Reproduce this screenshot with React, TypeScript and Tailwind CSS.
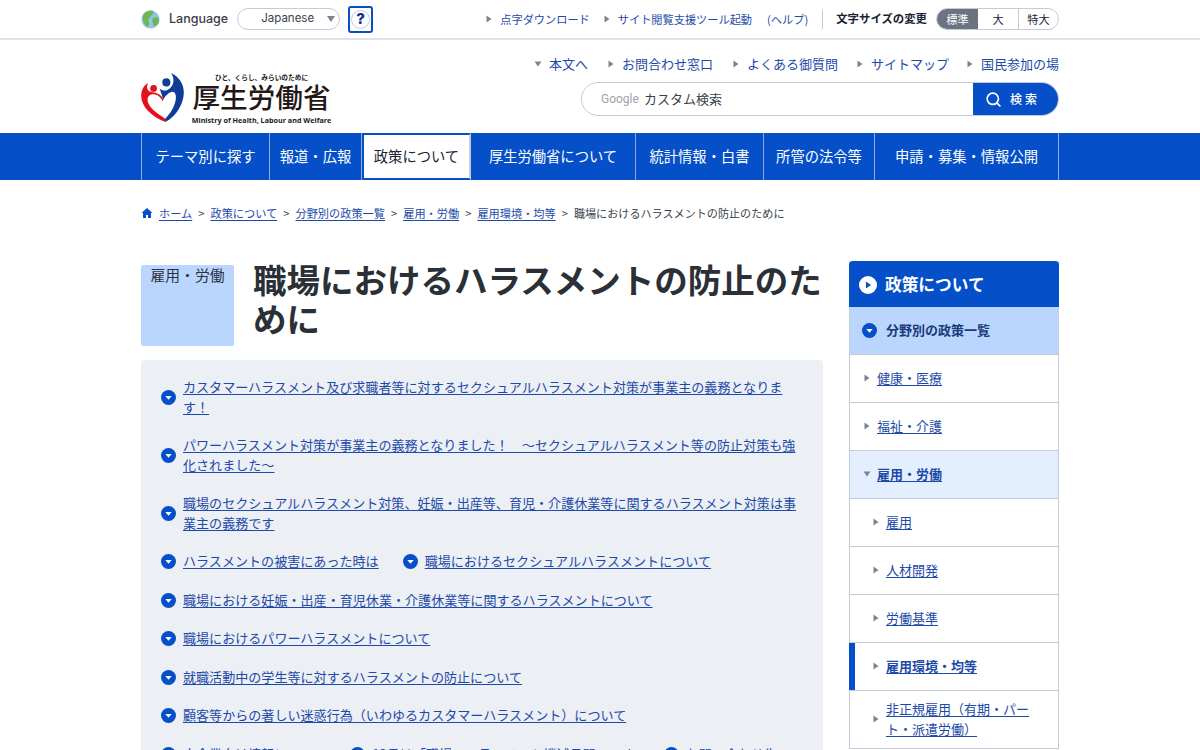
import { Search } from "lucide-react";

const font = { fontFamily: '"Noto Sans CJK JP", "Noto Sans", sans-serif' };

function Arrow({ down, className = "" }: { down?: boolean; className?: string }) {
  return (
    <svg viewBox="0 0 8 8" className={`h-2 w-2 shrink-0 fill-[#7b8494] ${className}`}>
      {down ? <path d="M0.5 1.5h7L4 6.5z" /> : <path d="M1.5 0.5v7L6.5 4z" />}
    </svg>
  );
}

function Bullet({ className = "" }: { className?: string }) {
  return (
    <svg viewBox="0 0 16 16" className={`h-[15px] w-[15px] shrink-0 ${className}`}>
      <circle cx="8" cy="8" r="8" fill="#0550c8" />
      <path d="M4.6 6.4h6.8L8 10.4z" fill="#fff" />
    </svg>
  );
}

function Logo() {
  return (
    <div className="flex items-end">
      <svg viewBox="33 42 127 146" className="mb-[3px] h-[49px] w-[43px] shrink-0">
        <path d="M105 188C62 172 33 142 33 110C33 92 42 78 54 72C48 84 50 92 58 97C70 100 85 100 97 115z" fill="#e60f1e" />
        <path d="M105 188C140 170 160 130 160 100C160 75 145 52 122 42C134 60 130 78 118 88C110 95 100 98 88 88L97 115z" fill="#0f3c96" />
        <path d="M105 178C78 162 52 142 52 122C52 108 64 104 74 106C84 108 92 116 97 126C102 112 115 100 125 98C135 96 138 110 136 122C132 145 118 165 105 178z" fill="#fff" />
        <circle cx="70" cy="88" r="10" fill="#e60f1e" />
        <circle cx="108" cy="70" r="12" fill="#0f3c96" />
      </svg>
      <div className="ml-[8px] flex w-[139px] flex-col items-center text-[#231815]">
        <span className="text-[6.7px] leading-[10px] font-bold">ひと、くらし、みらいのために</span>
        <span className="mb-[5px] text-[27.6px] leading-[28px] font-medium">厚生労働省</span>
        <span className="text-[7.2px] leading-[10px] font-bold whitespace-nowrap" style={{ fontFamily: '"Open Sans", sans-serif' }}>
          Ministry of Health, Labour and Welfare
        </span>
      </div>
    </div>
  );
}

const navItems = [
  { label: "テーマ別に探す", w: "w-[128px]" },
  { label: "報道・広報", w: "w-[92px]" },
  { label: "政策について", w: "w-[109px]", active: true },
  { label: "厚生労働省について", w: "w-[165px]" },
  { label: "統計情報・白書", w: "w-[128px]" },
  { label: "所管の法令等", w: "w-[111px]" },
  { label: "申請・募集・情報公開", w: "flex-1" },
];

const crumbs = ["ホーム", "政策について", "分野別の政策一覧", "雇用・労働", "雇用環境・均等"];

const rows = [
  ["カスタマーハラスメント及び求職者等に対するセクシュアルハラスメント対策が事業主の義務となります！"],
  ["パワーハラスメント対策が事業主の義務となりました！　～セクシュアルハラスメント等の防止対策も強化されました～"],
  ["職場のセクシュアルハラスメント対策、妊娠・出産等、育児・介護休業等に関するハラスメント対策は事業主の義務です"],
  ["ハラスメントの被害にあった時は", "職場におけるセクシュアルハラスメントについて"],
  ["職場における妊娠・出産・育児休業・介護休業等に関するハラスメントについて"],
  ["職場におけるパワーハラスメントについて"],
  ["就職活動中の学生等に対するハラスメントの防止について"],
  ["顧客等からの著しい迷惑行為（いわゆるカスタマーハラスメント）について"],
  ["大企業向け情報について", "12月は「職場のハラスメント撲滅月間」です", "お問い合わせ先"],
];

const sideItems = [
  { label: "健康・医療" },
  { label: "福祉・介護" },
  { label: "雇用・労働", open: true },
  { label: "雇用", sub: true },
  { label: "人材開発", sub: true },
  { label: "労働基準", sub: true },
  { label: "雇用環境・均等", sub: true, current: true },
  { label: "非正規雇用（有期・パート・派遣労働）", sub: true },
];

export default function App() {
  return (
    <div className="h-[750px] overflow-hidden bg-white text-[#1a2233]" style={font}>
      <div className="h-10 border-b-2 border-[#dfe2e9]">
        <div className="mx-auto flex h-[38px] w-[918px] items-center">
          <svg viewBox="0 0 20 20" className="h-[19px] w-[19px]">
            <circle cx="10" cy="10" r="9.5" fill="#8fc6e8" />
            <path d="M3 4c3-3 7-4 10-3 1 3-2 4-3 6s-3 2-2 5 1 5-2 5C3 15 0 9 3 4zM14 8c3-1 5 0 5 3s-2 5-5 6c-2-1-1-4-2-5s1-4 2-4z" fill="#6fb653" />
          </svg>
          <span className="ml-[9px] text-[12.5px] font-medium text-[#3a3f4a]" style={{ fontFamily: "Inter, sans-serif" }}>
            Language
          </span>
          <div className="ml-[9px] flex h-[22px] w-[103px] items-center justify-end rounded-full border border-[#c7cbd6] pr-[4px]">
            <span className="mr-[13px] text-[11.5px] text-[#3a3f4a]" style={{ fontFamily: "Inter, sans-serif" }}>
              Japanese
            </span>
            <svg viewBox="0 0 8 6" className="h-[6px] w-2 fill-[#7b8494]">
              <path d="M0 0h8L4 6z" />
            </svg>
          </div>
          <div className="ml-2 flex h-[27px] w-[25px] items-center justify-center rounded-[3px] border-2 border-[#0550c8] bg-white">
            <span
              className="flex h-[19px] w-[19px] items-center justify-center rounded-full border border-[#c7cbd6] text-[15px] font-extrabold text-[#0f2f8c]"
              style={{ fontFamily: "Inter, sans-serif" }}
            >
              ?
            </span>
          </div>
          <div className="ml-auto flex items-center text-[11.2px] text-[#1d4aa8]">
            <Arrow className="mr-[7px]" />
            <span>点字ダウンロード</span>
            <Arrow className="ml-[13px] mr-[7px]" />
            <span>サイト閲覧支援ツール起動</span>
            <span className="ml-[15px]">(ヘルプ)</span>
            <span className="ml-[14px] mr-[13px] h-[19px] w-px bg-[#c7cbd6]" />
            <span className="text-[11.4px] font-bold text-[#1a2233]">文字サイズの変更</span>
            <div className="ml-[9px] flex h-[22px] w-[123px] overflow-hidden rounded-full border border-[#c7cbd6] text-[#1a2233]">
              <span className="flex w-[41px] items-center justify-center bg-[#6b7280] text-white">標準</span>
              <span className="flex w-[41px] items-center justify-center border-r border-[#c7cbd6]">大</span>
              <span className="flex flex-1 items-center justify-center">特大</span>
            </div>
          </div>
        </div>
      </div>

      <div className="mx-auto flex h-[93px] w-[918px] items-end justify-between pb-[8px]">
        <Logo />
        <div className="flex flex-col items-end">
          <div className="flex items-center text-[13px] leading-5 text-[#1d4aa8]">
            <Arrow down className="mr-[7px]" />
            <span>本文へ</span>
            <Arrow className="ml-[19px] mr-[7px]" />
            <span>お問合わせ窓口</span>
            <Arrow className="ml-[19px] mr-[7px]" />
            <span>よくある御質問</span>
            <Arrow className="ml-[18px] mr-[7px]" />
            <span>サイトマップ</span>
            <Arrow className="ml-[17px] mr-[7px]" />
            <span>国民参加の場</span>
          </div>
          <div className="mb-[9px] mt-[8px] flex h-[34px] w-[478px] overflow-hidden rounded-full border border-[#c7cbd6]">
            <div className="flex flex-1 items-center pl-[19px] text-[13px] text-[#3a3f4a]">
              <span className="mr-[5px] text-[12px] text-[#a0a4ac]" style={{ fontFamily: "Roboto, sans-serif" }}>
                Google
              </span>
              カスタム検索
            </div>
            <div className="flex w-[85px] items-center justify-center gap-[8px] bg-[#0550c8] pr-[6px] text-[12px] tracking-[3px] text-white">
              <Search className="h-[17px] w-[17px]" strokeWidth={2.4} />
              <span className="font-medium">検索</span>
            </div>
          </div>
        </div>
      </div>

      <div className="h-[47px] bg-[#0550c8]">
        <div className="mx-auto flex h-full w-[918px] border-l border-[#8fa9e0]">
          {navItems.map((n) => (
            <div
              key={n.label}
              className={`${n.w} flex shrink-0 items-center justify-center pb-[2px] text-[14.3px] ${
                n.active
                  ? "border-2 border-[#0550c8] border-r-[#c7cbd6] bg-white text-[#1a2233]"
                  : "border-r border-[#8fa9e0] text-white"
              }`}
            >
              {n.label}
            </div>
          ))}
        </div>
      </div>

      <div className="mx-auto flex h-[67px] w-[918px] items-center pb-[1px] text-[11.2px]">
        <svg viewBox="0 0 12 12" className="mr-[6px] h-3 w-3 fill-[#0550c8]">
          <path d="M6 1 0.5 6H2v5h3V8h2v3h3V6h1.5z" />
        </svg>
        {crumbs.map((c) => (
          <span key={c} className="flex items-center">
            <span className="text-[#1d4aa8] underline underline-offset-2">{c}</span>
            <span className="mx-[6px] text-[#3a3f4a]">&gt;</span>
          </span>
        ))}
        <span className="text-[11.1px] text-[#3a3f4a]">職場におけるハラスメントの防止のために</span>
      </div>

      <div className="mx-auto flex w-[918px] items-start justify-between pt-[14px]">
        <div className="w-[682px] pt-[4px]">
          <div className="flex items-start">
            <div className="h-[81px] w-[93px] shrink-0 rounded-[2px] bg-[#bbd6fe] text-center text-[14.8px] leading-[20px] text-[#2b3240]">
              雇用・労働
            </div>
            <h1 className="-mt-[6px] ml-[19px] text-[33.5px] leading-[39px] font-bold text-[#2b2f36]">
              職場におけるハラスメントの防止のために
            </h1>
          </div>
          <div className="mt-[14px] rounded-[4px] bg-[#eceff4] pl-5 pr-[22px] pt-[17px]">
            {rows.map((r) => (
              <div key={r[0]} className="mb-[19px] flex items-center text-[13.07px] leading-[19.5px]">
                {r.map((t) => (
                  <div key={t} className={`flex items-center last:mr-0 ${t.startsWith("12月") ? "mr-[29px]" : "mr-6"}`}>
                    <Bullet className="mr-[7px] mt-[2px]" />
                    <a className="text-[#1d4aa8] underline underline-offset-2">{t}</a>
                  </div>
                ))}
              </div>
            ))}
          </div>
        </div>

        <div className="w-[210px] border-x border-[#c7cbd6] text-[13px]">
          <div className="-mx-px flex h-[46px] items-center rounded-t-[4px] bg-[#0550c8] pl-[10px] pt-px text-[16.7px] font-bold text-white">
            <svg viewBox="0 0 18 18" className="mr-[8px] h-[18px] w-[18px]">
              <circle cx="9" cy="9" r="9" fill="#fff" />
              <path d="M7 5.5v7l5-3.5z" fill="#0550c8" />
            </svg>
            政策について
          </div>
          <div className="flex h-[48px] items-center border-b border-[#c7cbd6] bg-[#bbd6fe] pb-px pl-[12px] font-bold text-[#1a3a7a]">
            <Bullet className="mr-[9px]" />
            分野別の政策一覧
          </div>
          {sideItems.map((s) => (
            <div
              key={s.label}
              className={`relative flex min-h-[48px] items-center border-b border-[#c7cbd6] pb-[10px] pt-[8px] pr-[12px] ${
                s.sub ? "pl-[22px]" : "pl-[13px]"
              } ${s.open ? "bg-[#e3efff]" : ""}`}
            >
              {s.current && <span className="absolute -left-px top-0 h-full w-[6px] bg-[#0550c8]" />}
              <Arrow down={s.open} className="mr-[6px]" />
              <a className={`text-[#1d4aa8] underline underline-offset-2 ${s.open || s.current ? "font-bold" : ""}`}>
                {s.label}
              </a>
            </div>
          ))}
        </div>
      </div>
    </div>
  );
}
